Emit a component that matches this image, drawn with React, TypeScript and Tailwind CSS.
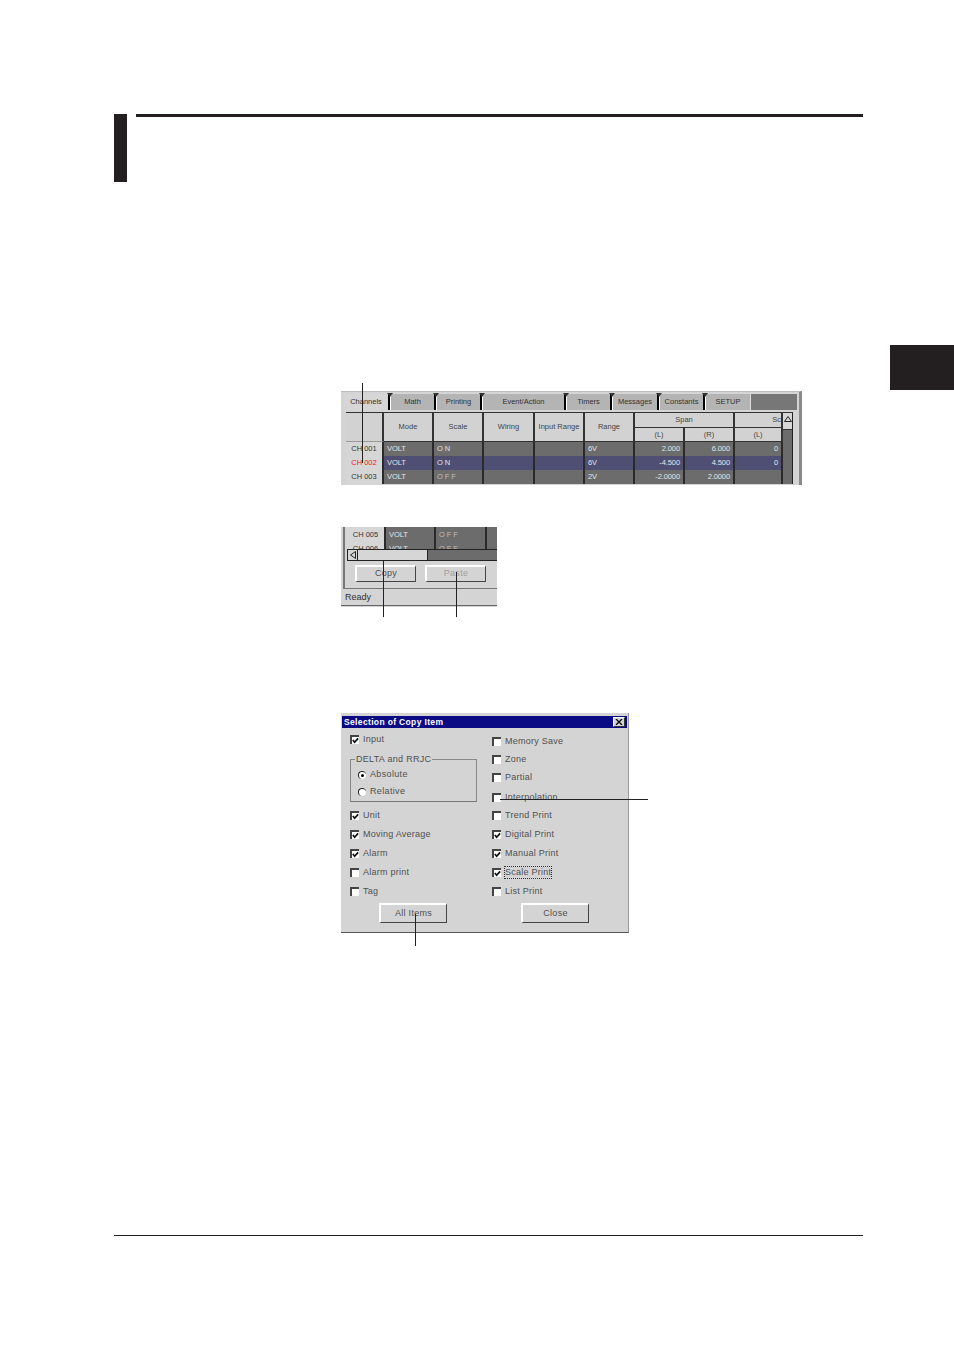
import React from "react";

const Tab = ({ label, w, active, last }: { label: string; w: string; active?: boolean; last?: boolean }) => (
  <div className={`relative flex h-4 items-center justify-center text-[7.5px] text-[#333] ${w} ${last ? "border-r border-[#ddd]" : "border-r-2 border-black"} ${active ? "bg-[#d6d6d6]" : "border-l border-l-white bg-[#b4b4b4]"}`}>
    {!active && <span className="absolute left-[-4px] top-[-1px] h-0 w-0 border-x-[3px] border-t-[4px] border-x-transparent border-t-[#333]" />}
    {label}
  </div>
);

const Head = ({ children, cls = "" }: { children?: React.ReactNode; cls?: string }) => (
  <div className={`flex items-center justify-center border-b border-r-2 border-[#333] bg-[#d2d2d2] text-[7.5px] text-[#444] ${cls}`}>{children}</div>
);

const Cell = ({ children, sel, right, dim }: { children?: React.ReactNode; sel?: boolean; right?: boolean; dim?: boolean }) => (
  <div className={`flex items-center border-r-2 border-[#2a2a2a] px-[3px] text-[7.5px] tracking-[-0.1px] ${sel ? "bg-[#4f4f74]" : "bg-[#6c6c6c]"} ${right ? "justify-end" : ""} ${dim ? "text-[#bdbdbd]" : "text-[#e4e4e4]"}`}>{children}</div>
);

const Row = ({ ch, scale, range, l, r, z, sel, off }: { ch: string; scale: string; range: string; l: string; r: string; z?: string; sel?: boolean; off?: boolean }) => (
  <>
    <div className={`flex items-center justify-center border-r-2 border-[#2a2a2a] bg-[#d6d6d6] text-[7.5px] ${sel ? "text-[#f02020]" : "text-[#333]"}`}>{ch}</div>
    <Cell sel={sel}>VOLT</Cell>
    <Cell sel={sel} dim={off}>{scale}</Cell>
    <Cell sel={sel} />
    <Cell sel={sel} />
    <Cell sel={sel}>{range}</Cell>
    <Cell sel={sel} right>{l}</Cell>
    <Cell sel={sel} right>{r}</Cell>
    <Cell sel={sel} right>{z}</Cell>
  </>
);

const Check = ({ checked, label, dashed, cls = "" }: { checked?: boolean; label: string; dashed?: boolean; cls?: string }) => (
  <div className={`flex h-[19px] items-center ${cls}`}>
    <div className="flex h-[9px] w-[9px] shrink-0 items-center justify-center border-l-2 border-t-2 border-l-[#444] border-t-[#444] bg-white">
      {checked && (
        <svg viewBox="0 0 8 8" className="h-[7px] w-[7px]">
          <path d="M1 3.5 L3 6 L7 1.5" stroke="#111" strokeWidth="2" fill="none" />
        </svg>
      )}
    </div>
    <span className={`ml-1 text-[9px] leading-[11px] tracking-[0.25px] text-[#505050] ${dashed ? "outline outline-1 outline-dotted outline-[#333]" : ""}`}>{label}</span>
  </div>
);

const Radio = ({ on, label }: { on?: boolean; label: string }) => (
  <div className="flex h-[17px] items-center">
    <div className="flex h-2 w-2 items-center justify-center rounded-full border-l border-t border-[#222] bg-white">
      {on && <div className="h-[3px] w-[3px] rounded-full bg-black" />}
    </div>
    <span className="ml-1 text-[9px] tracking-[0.35px] text-[#505050]">{label}</span>
  </div>
);

const Btn = ({ label, w, dim }: { label: string; w: string; dim?: boolean }) => (
  <div className={`flex items-center justify-center border-b border-l-2 border-r border-t-2 border-b-[#444] border-l-white border-r-[#444] border-t-white bg-[#d4d4d4] text-[9px] tracking-[0.3px] ${w} ${dim ? "text-[#a0a0a0]" : "text-[#505050]"}`}>{label}</div>
);

export default function App() {
  return (
    <div className="relative h-[1350px] w-[954px] overflow-hidden bg-white font-['Liberation_Sans',sans-serif]">
      <header className="ml-[114px] flex gap-[9px] pt-[114px]">
        <div className="h-[68px] w-[13px] bg-[#231f20]" />
        <div className="h-[3px] w-[727px] bg-[#231f20]" />
      </header>

      <div className="mt-[163px] flex justify-end">
        <div className="h-[45px] w-[64px] bg-[#231f20]" />
      </div>

      {/* Figure 1: table */}
      <section className="ml-[341px] mt-px h-[94px] w-[461px] overflow-hidden border-r-[3px] border-t border-[#8a8a8a] border-t-[#bdbdbd] bg-[#d4d4d4]">
        <div className="ml-[3px] mt-[2px] flex h-4 w-[453px] bg-[#777]">
          <Tab label="Channels" w="w-[46px]" active />
          <Tab label="Math" w="w-[46px]" />
          <Tab label="Printing" w="w-[46px]" />
          <Tab label="Event/Action" w="w-[84px]" />
          <Tab label="Timers" w="w-[46px]" />
          <Tab label="Messages" w="w-[47px]" />
          <Tab label="Constants" w="w-[46px]" />
          <Tab label="SETUP" w="w-[46px]" last />
        </div>
        <div className="ml-[5px] mt-[2px] flex w-[447px] border-t border-[#333]">
          <div className="grid grid-cols-[38px_50px_50px_51px_50px_50px_50px_50px_48px] grid-rows-[15px_14px_14px_14px_14px]">
            <Head cls="row-span-2 border-b-[#999]" />
            <Head cls="row-span-2">Mode</Head>
            <Head cls="row-span-2">Scale</Head>
            <Head cls="row-span-2">Wiring</Head>
            <Head cls="row-span-2">Input Range</Head>
            <Head cls="row-span-2">Range</Head>
            <Head cls="col-span-2">Span</Head>
            <Head cls="justify-end">Sc</Head>
            <Head>(L)</Head>
            <Head>(R)</Head>
            <Head>(L)</Head>
            <Row ch="CH 001" scale="O N" range="6V" l="2.000" r="6.000" z="0" />
            <Row ch="CH 002" scale="O N" range="6V" l="-4.500" r="4.500" z="0" sel />
            <Row ch="CH 003" scale="O F F" range="2V" l="-2.0000" r="2.0000" off />
          </div>
          <div className="flex w-[10px] flex-col border-r border-[#222] bg-[#6c6c6c]">
            <div className="flex h-[17px] items-start justify-center border-b border-[#333] bg-[#d6d6d6] pt-[3px]">
              <svg viewBox="0 0 8 6" className="h-[6px] w-2">
                <path d="M4 .5 L7.5 5.5 H.5 Z" fill="none" stroke="#222" />
              </svg>
            </div>
          </div>
        </div>
      </section>

      {/* Figure 2: copy / paste */}
      <section className="ml-[341px] mt-[42px] h-[80px] w-[156px] overflow-hidden bg-[#d4d4d4]">
        <div className="ml-[2px] h-[62px] border-b border-l-2 border-[#777] pl-[2px]">
          <div className="grid h-[15px] grid-cols-[39px_50px_51px_1fr]">
            <div className="flex items-center justify-center border-r-2 border-[#2a2a2a] bg-[#d6d6d6] text-[7.5px] text-[#333]">CH 005</div>
            <Cell>VOLT</Cell>
            <Cell dim>O F F</Cell>
            <div className="bg-[#6c6c6c]" />
          </div>
          <div className="grid h-[7px] grid-cols-[39px_50px_51px_1fr] overflow-hidden">
            <div className="flex h-[14px] items-center justify-center border-r-2 border-[#2a2a2a] bg-[#d6d6d6] text-[7.5px] text-[#333]">CH 006</div>
            <Cell>VOLT</Cell>
            <Cell dim>O F F</Cell>
            <div className="bg-[#6c6c6c]" />
          </div>
          <div className="flex h-3 border-y border-[#222] bg-[#6c6c6c]">
            <div className="flex w-[11px] items-center justify-center border-x border-[#222] bg-[#d6d6d6]">
              <svg viewBox="0 0 6 8" className="h-2 w-[6px]">
                <path d="M.5 4 L5.5 .5 V7.5 Z" fill="none" stroke="#222" />
              </svg>
            </div>
            <div className="w-[70px] border-r border-[#222] bg-[#d6d6d6]" />
          </div>
          <div className="mt-[4px] flex gap-[9px] pl-2">
            <Btn label="Copy" w="h-[17px] w-[61px]" />
            <Btn label="Paste" w="h-[17px] w-[61px]" dim />
          </div>
        </div>
        <div className="flex h-[17px] items-center border-b border-[#666] pl-1 pt-[2px] text-[9px] text-[#333]">Ready</div>
      </section>

      {/* Figure 3: dialog */}
      <section className="ml-[341px] mt-[106px] h-[220px] w-[288px] border-b border-r border-[#555] border-r-[#999] bg-[#d4d4d4] pl-px pt-[3px]">
        <div className="flex h-[12px] w-[285px] items-center justify-between bg-[#0a0a84] pl-[2px] pr-[2px]">
          <span className="text-[8.5px] font-bold tracking-[0.35px] text-white">Selection of Copy Item</span>
          <div className="flex h-[10px] w-3 items-center justify-center border border-[#333] border-l-white border-t-white bg-[#d4d4d4]">
            <svg viewBox="0 0 8 6" className="h-[6px] w-2">
              <path d="M1 0 L7 6 M7 0 L1 6" stroke="#111" strokeWidth="1.4" />
            </svg>
          </div>
        </div>
        <div className="flex">
          <div className="ml-2 w-[142px]">
            <Check checked label="Input" cls="mt-[2px]" />
            <div className="relative mt-[10px] h-[43px] w-[127px] border border-[#888] border-b-[#777] pl-[7px] pt-[6px]">
              <span className="absolute left-[4px] top-[-6px] bg-[#d4d4d4] px-px text-[9px] leading-[11px] tracking-[0.3px] text-[#505050]">DELTA and RRJC</span>
              <Radio on label="Absolute" />
              <Radio label="Relative" />
            </div>
            <Check checked label="Unit" cls="mt-[4px]" />
            <Check checked label="Moving Average" />
            <Check checked label="Alarm" />
            <Check label="Alarm print" />
            <Check label="Tag" />
            <div className="ml-[29px] mt-[2px] flex">
              <Btn label="All Items" w="h-[20px] w-[68px]" />
            </div>
          </div>
          <div className="w-[120px]">
            <Check label="Memory Save" cls="mt-[4px]" />
            <Check label="Zone" cls="-mt-px" />
            <Check label="Partial" cls="-mt-px" />
            <Check label="Interpolation" cls="mt-px" />
            <Check label="Trend Print" cls="-mt-px" />
            <Check checked label="Digital Print" />
            <Check checked label="Manual Print" />
            <Check checked label="Scale Print" dashed />
            <Check label="List Print" />
            <div className="ml-[29px] mt-[2px] flex">
              <Btn label="Close" w="h-[20px] w-[68px]" />
            </div>
          </div>
        </div>
      </section>

      <div className="ml-[114px] mt-[302px] h-px w-[749px] bg-[#231f20]" />

      {/* Callout lines over the figures */}
      <div className="absolute left-[362px] top-[383px] h-[80px] w-px bg-[#222]" />
      <div className="absolute left-[383px] top-[560px] h-[57px] w-px bg-[#222]" />
      <div className="absolute left-[456px] top-[572px] h-[45px] w-px bg-[#222]" />
      <div className="absolute left-[500px] top-[799px] h-px w-[148px] bg-[#222]" />
      <div className="absolute left-[415px] top-[914px] h-[32px] w-px bg-[#222]" />
    </div>
  );
}
